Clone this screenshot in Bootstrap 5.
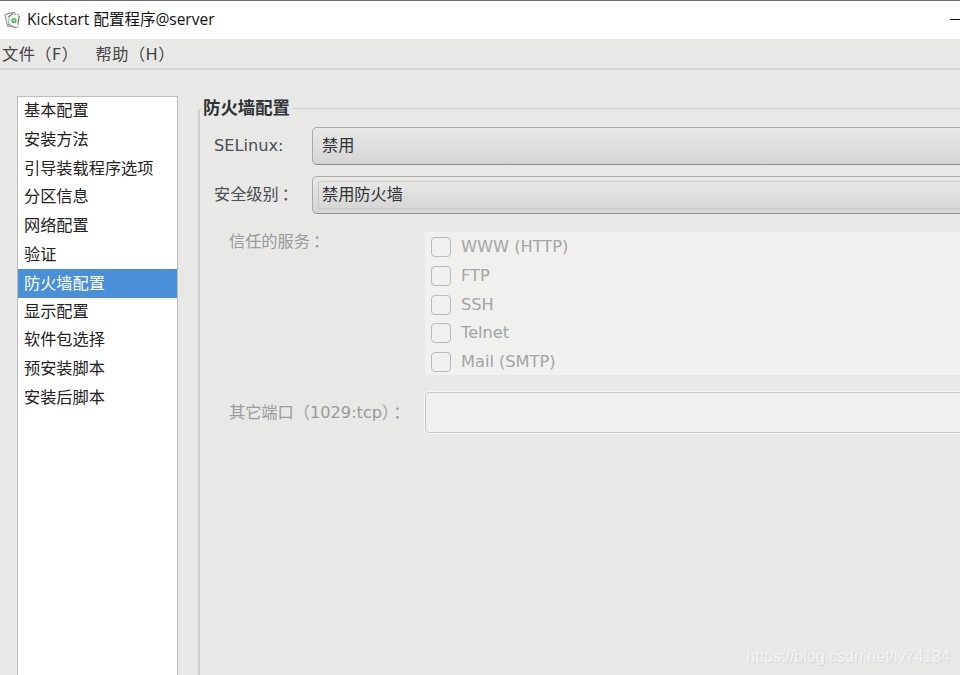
<!DOCTYPE html>
<html lang="zh-CN">
<head>
    <meta charset="UTF-8">
    <title>Kickstart 配置程序@server</title>
    <link href="https://cdn.jsdelivr.net/npm/bootstrap@5.3.0/dist/css/bootstrap.min.css" rel="stylesheet">
    <style>
        html, body { height: 100%; }
        body {
            overflow: hidden;
            background: #e8e8e7;
            color: #2e3436;
            font-family: "DejaVu Sans", "Noto Sans CJK SC", sans-serif;
            font-size: 16.2px;
        }
        .app-window { height: 675px; position: relative; overflow: hidden; display: flex; flex-direction: column; }
        .title-bar {
            height: 39px;
            flex: none;
            background: #fff;
            border-top: 1px solid #6e6e6e;
            color: #111;
            font-family: "Open Sans", "Noto Sans CJK SC", sans-serif;
            font-size: 15.5px;
            padding-left: 4px;
            gap: 5px;
        }
        .min-btn { position: absolute; right: 0; top: 19px; width: 10px; height: 1px; background: #111; }
        .menu-bar {
            height: 31px;
            flex: none;
            border-bottom: 2px solid #d3d3d1;
            padding: 3px 0 0 2px;
            gap: 17px;
            color: #444;
            letter-spacing: .5px;
        }
        .main-area { flex: 1; min-height: 0; padding: 26px 0 0 17px; gap: 20px; }
        .side-list {
            width: 161px;
            flex: none;
            background: #fff;
            border: 1px solid #bdbdbb;
            border-bottom: 0;
            border-radius: 0;
            padding-top: 0;
        }
        .side-list .list-group-item {
            height: 28.8px;
            padding: 0 0 0 6px;
            border: 0;
            border-radius: 0;
            background: transparent;
            color: #222;
            line-height: 27.9px;
            white-space: nowrap;
        }
        .side-list .list-group-item.active { background: #4a90d9; color: #fff; line-height: 29px; }
        .fw-frame {
            flex: 1;
            min-width: 0;
            margin: 12px -20px 0 0;
            border-left: 2px solid #cfcfcd;
            border-top: 1px solid #cfcfcd;
            border-top-left-radius: 4px;
            position: relative;
            padding: 18px 0 0 14px;
        }
        .fw-legend {
            position: absolute;
            left: 1px;
            top: -12px;
            background: #e8e8e7;
            padding: 0 3px 0 2px;
            line-height: 22px;
            font-size: 17.4px;
            font-weight: 700;
            color: #2e3436;
        }
        .form-line { display: flex; align-items: center; margin-bottom: 11px; }
        .form-line label { width: 98px; flex: none; color: #4a4f50; white-space: nowrap; line-height: 20px; }
        .combo-btn {
            flex: 1;
            height: 38px;
            border: 1px solid #a9aaa5;
            border-bottom-color: #8f9089;
            border-radius: 5px 0 0 5px;
            background: linear-gradient(#e9e9e8, #d4d4d2);
            padding-left: 9px;
            color: #2e3436;
            display: flex;
            align-items: center;
        }
        .combo-btn .combo-inner {
            flex: 1;
            height: 28px;
            line-height: 26px;
            margin-left: -4px;
            padding-left: 3px;
            border: 1px solid #c8c8c6;
            border-right: 0;
            border-radius: 3px 0 0 3px;
        }
        .colon-mark { font-family: "Noto Sans CJK TC", sans-serif; margin-left: 3px; line-height: 1; }
        .trust-row { display: flex; margin: 18px 0 17px 15px; }
        .trust-row .trust-label { width: 196px; flex: none; color: #999b9b; line-height: 16px; }
        .service-box { flex: 1; height: 143px; background: #f0f0ef; padding: 1px 6px 0; }
        .service-item { height: 28.7px; display: flex; align-items: center; gap: 10px; color: #a3a5a5; }
        .fake-check {
            width: 20px;
            height: 20px;
            flex: none;
            border: 1px solid #b9bab7;
            border-radius: 4px;
            background: #f0f0ef;
        }
        .port-row { display: flex; align-items: center; margin-left: 15px; color: #999b9b; }
        .port-row .port-label { width: 196px; flex: none; white-space: nowrap; line-height: 20px; }
        .port-input {
            flex: 1;
            height: 41px;
            border: 1px solid #c6c6c4;
            border-radius: 4px 0 0 4px;
            background: #f0f0ef;
            box-shadow: 0 0 0 1px #f6f6f5;
        }
        .watermark {
            position: absolute;
            right: 10px;
            top: 645px;
            font-family: "Liberation Sans", sans-serif;
            font-size: 16px;
            color: #f3f3f3;
            text-shadow: 1px 1px 1px #d4d4d4;
        }
    </style>
</head>
<body>
    <div class="app-window">
        <div class="title-bar d-flex align-items-center">
            <svg width="18" height="20" viewBox="0 0 18 20">
                <rect x="2" y="3" width="10" height="13" rx="1" fill="#eef0ee" stroke="#8d938d" stroke-width="1" transform="rotate(-14 7 9)"/>
                <rect x="5" y="4" width="10" height="13" rx="1" fill="#f3f4f3" stroke="#9aa09a" stroke-width="1" stroke-dasharray="2 1" transform="rotate(10 10 10)"/>
                <path d="M4 7 L9 4 M4 14 L12 18 M15 6 L14 14" stroke="#767c76" stroke-width="1" fill="none"/>
                <circle cx="10" cy="10.5" r="2.6" fill="#58b458"/>
                <circle cx="10" cy="10.5" r="1" fill="#c9e8c9"/>
            </svg>
            <span>Kickstart 配置程序@server</span>
            <span class="min-btn"></span>
        </div>
        <div class="menu-bar d-flex align-items-center">
            <span>文件（F）</span>
            <span>帮助（H）</span>
        </div>
        <div class="main-area d-flex">
            <div class="list-group side-list">
                <div class="list-group-item">基本配置</div>
                <div class="list-group-item">安装方法</div>
                <div class="list-group-item">引导装载程序选项</div>
                <div class="list-group-item">分区信息</div>
                <div class="list-group-item">网络配置</div>
                <div class="list-group-item">验证</div>
                <div class="list-group-item active">防火墙配置</div>
                <div class="list-group-item">显示配置</div>
                <div class="list-group-item">软件包选择</div>
                <div class="list-group-item">预安装脚本</div>
                <div class="list-group-item">安装后脚本</div>
            </div>
            <div class="fw-frame">
                <div class="fw-legend">防火墙配置</div>
                <div class="form-line">
                    <label>SELinux:</label>
                    <div class="combo-btn">禁用</div>
                </div>
                <div class="form-line">
                    <label>安全级别<span class="colon-mark">：</span></label>
                    <div class="combo-btn"><div class="combo-inner">禁用防火墙</div></div>
                </div>
                <div class="trust-row">
                    <div class="trust-label">信任的服务<span class="colon-mark">：</span></div>
                    <div class="service-box">
                        <div class="service-item"><span class="fake-check"></span>WWW (HTTP)</div>
                        <div class="service-item"><span class="fake-check"></span>FTP</div>
                        <div class="service-item"><span class="fake-check"></span>SSH</div>
                        <div class="service-item"><span class="fake-check"></span>Telnet</div>
                        <div class="service-item"><span class="fake-check"></span>Mail (SMTP)</div>
                    </div>
                </div>
                <div class="port-row">
                    <div class="port-label">其它端口（1029:tcp）<span class="colon-mark">：</span></div>
                    <div class="port-input"></div>
                </div>
            </div>
        </div>
        <div class="watermark">https://blog.csdn.net/lv74134</div>
    </div>
    <script src="https://cdn.jsdelivr.net/npm/bootstrap@5.3.0/dist/js/bootstrap.bundle.min.js"></script>
</body>
</html>
